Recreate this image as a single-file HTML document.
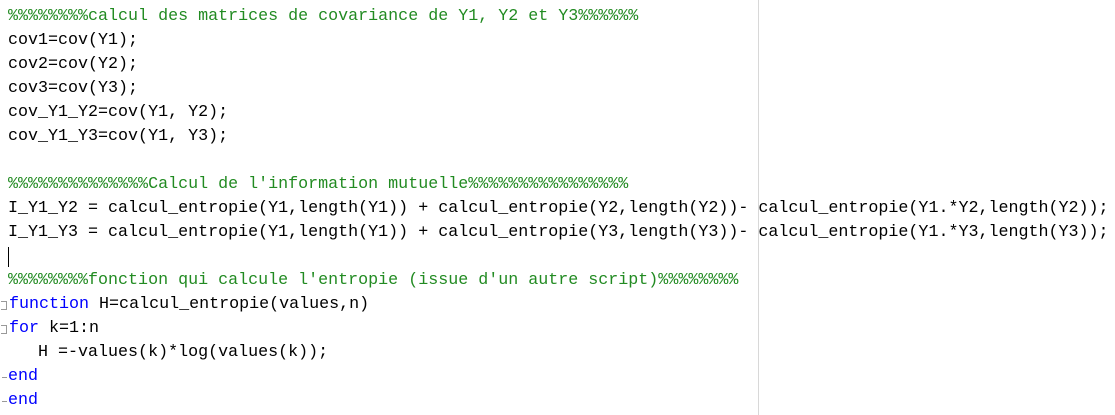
<!DOCTYPE html>
<html><head><style>
body{margin:0;width:1115px;height:415px;background:#fff;overflow:hidden;position:relative;font-family:"Liberation Mono",monospace;font-size:16.68px;}
.l{position:absolute;left:8px;white-space:pre;line-height:24px;height:24px;color:#000;}
.c{color:#228B22}.k{color:#0000FF}
.vl{position:absolute;left:758px;top:0;width:1px;height:415px;background:#d8d8d8}
.box{position:absolute;left:1px;width:6px;height:9px;border:1px solid #999;border-left:none;box-sizing:border-box}
.dash{position:absolute;left:2px;width:5px;height:1px;background:#999}
.cur{position:absolute;left:8px;top:247px;width:1px;height:20px;background:#000}
</style></head><body>
<div class="vl"></div>
<div class="l c" style="top:5px">%%%%%%%%calcul des matrices de covariance de Y1, Y2 et Y3%%%%%%</div>
<div class="l" style="top:29px">cov1=cov(Y1);</div>
<div class="l" style="top:53px">cov2=cov(Y2);</div>
<div class="l" style="top:77px">cov3=cov(Y3);</div>
<div class="l" style="top:101px">cov_Y1_Y2=cov(Y1, Y2);</div>
<div class="l" style="top:125px">cov_Y1_Y3=cov(Y1, Y3);</div>
<div class="l c" style="top:173px">%%%%%%%%%%%%%%Calcul de l'information mutuelle%%%%%%%%%%%%%%%%</div>
<div class="l" style="top:197px">I_Y1_Y2 = calcul_entropie(Y1,length(Y1)) + calcul_entropie(Y2,length(Y2))- calcul_entropie(Y1.*Y2,length(Y2));</div>
<div class="l" style="top:221px">I_Y1_Y3 = calcul_entropie(Y1,length(Y1)) + calcul_entropie(Y3,length(Y3))- calcul_entropie(Y1.*Y3,length(Y3));</div>
<div class="cur"></div>
<div class="l c" style="top:269px">%%%%%%%%fonction qui calcule l'entropie (issue d'un autre script)%%%%%%%%</div>
<div class="box" style="top:301px"></div>
<div class="l" style="top:293px;left:9px"><span class="k">function</span> H=calcul_entropie(values,n)</div>
<div class="box" style="top:325px"></div>
<div class="l" style="top:317px;left:9px"><span class="k">for</span> k=1:n</div>
<div class="l" style="top:341px">   H =-values(k)*log(values(k));</div>
<div class="dash" style="top:377px"></div>
<div class="l k" style="top:365px">end</div>
<div class="dash" style="top:401px"></div>
<div class="l k" style="top:389px">end</div>
</body></html>
